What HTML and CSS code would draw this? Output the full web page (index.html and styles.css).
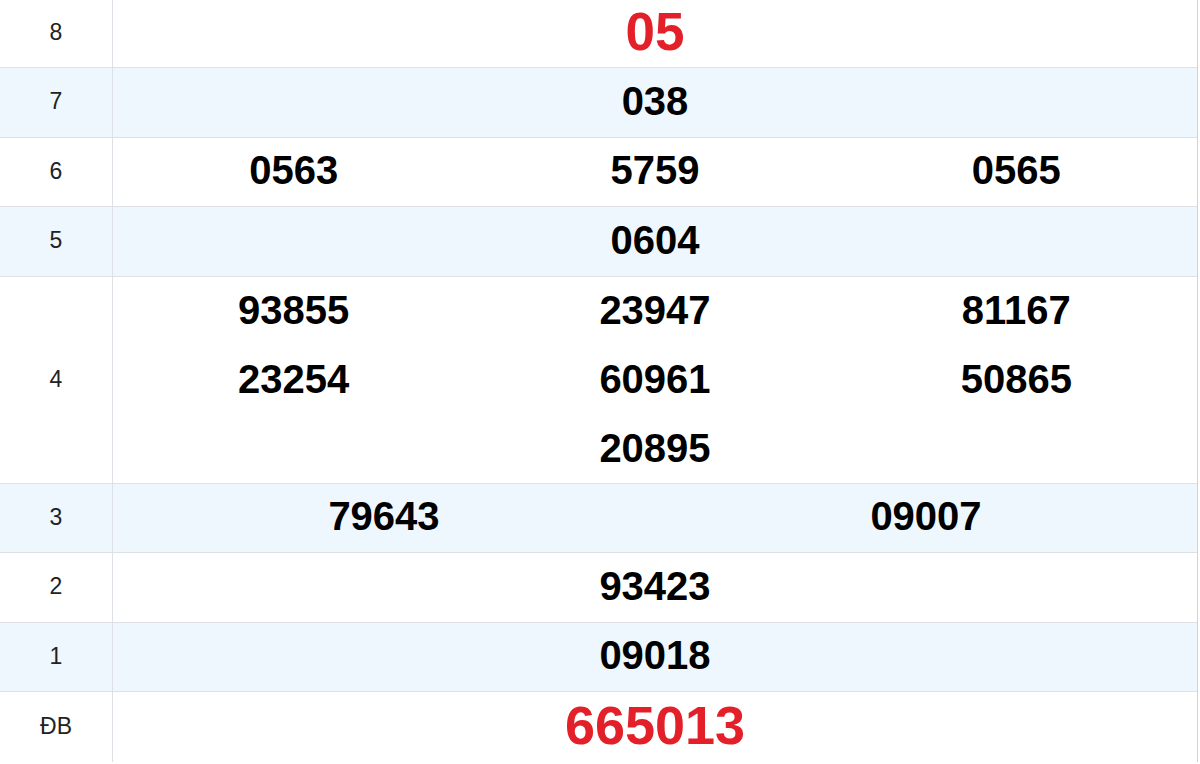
FILE: index.html
```html
<!DOCTYPE html>
<html lang="vi">
<head>
<meta charset="utf-8">
<title>Kết quả xổ số</title>
<link rel="stylesheet" href="styles.css">
</head>
<body>
<div class="table">
  <div class="row h68">
    <div class="label">8</div>
    <div class="cells c1"><span class="num red">05</span></div>
  </div>
  <div class="row alt h70">
    <div class="label">7</div>
    <div class="cells c1"><span class="num">038</span></div>
  </div>
  <div class="row h69">
    <div class="label">6</div>
    <div class="cells c3"><span class="num">0563</span><span class="num">5759</span><span class="num">0565</span></div>
  </div>
  <div class="row alt h70">
    <div class="label">5</div>
    <div class="cells c1"><span class="num">0604</span></div>
  </div>
  <div class="row h207">
    <div class="label">4</div>
    <div class="cells c3 multi">
      <span class="num">93855</span><span class="num">23947</span><span class="num">81167</span>
      <span class="num">23254</span><span class="num">60961</span><span class="num">50865</span>
      <span class="num"></span><span class="num">20895</span><span class="num"></span>
    </div>
  </div>
  <div class="row alt h69">
    <div class="label">3</div>
    <div class="cells c2"><span class="num">79643</span><span class="num">09007</span></div>
  </div>
  <div class="row h70">
    <div class="label">2</div>
    <div class="cells c1"><span class="num">93423</span></div>
  </div>
  <div class="row alt h69">
    <div class="label">1</div>
    <div class="cells c1"><span class="num">09018</span></div>
  </div>
  <div class="row h70 last">
    <div class="label">ĐB</div>
    <div class="cells c1"><span class="num red big">665013</span></div>
  </div>
</div>
</body>
</html>
```
FILE: styles.css
```css
html, body {
  margin: 0;
  padding: 0;
  background: #ffffff;
}
body {
  font-family: "Liberation Sans", Arial, sans-serif;
  color: #000;
}
.table {
  width: 1198px;
  box-sizing: border-box;
  border-right: 1px solid #cfd3d8;
}
.row {
  display: flex;
  box-sizing: border-box;
  border-bottom: 1px solid #dde1e6;
  background: #ffffff;
}
.row.last { border-bottom: none; }
.row.alt { background: #eef6fe; }
.h68 { height: 68px; }
.h69 { height: 69px; }
.h70 { height: 70px; }
.h207 { height: 207px; }
.label {
  width: 113px;
  flex: none;
  box-sizing: border-box;
  border-right: 1px solid #dde1e6;
  display: flex;
  align-items: center;
  justify-content: center;
  font-size: 23px;
  color: #222;
  padding-bottom: 2px;
}
.cells {
  flex: 1;
  display: grid;
  align-items: center;
  justify-items: center;
}
.c1 { grid-template-columns: 1fr; }
.c2 { grid-template-columns: 1fr 1fr; }
.c3 { grid-template-columns: 1fr 1fr 1fr; }
.multi { grid-template-rows: 69px 69px 69px; }
.num {
  font-size: 40px;
  font-weight: bold;
  line-height: 1;
  padding-bottom: 4px;
}
.red {
  color: #e3202a;
  font-size: 53px;
}
.big { font-size: 54px; }
```
